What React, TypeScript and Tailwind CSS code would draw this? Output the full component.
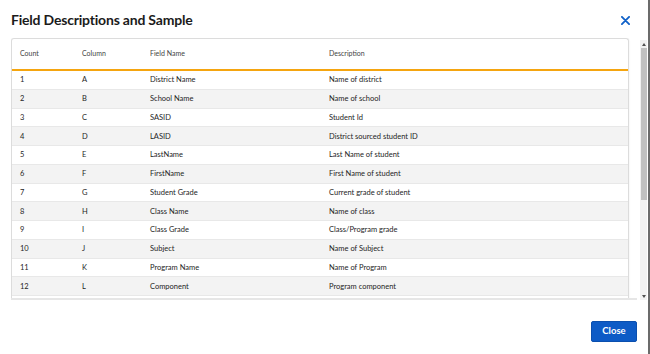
import React from "react";

const rows: [string, string, string, string][] = [
  ["1", "A", "District Name", "Name of district"],
  ["2", "B", "School Name", "Name of school"],
  ["3", "C", "SASID", "Student Id"],
  ["4", "D", "LASID", "District sourced student ID"],
  ["5", "E", "LastName", "Last Name of student"],
  ["6", "F", "FirstName", "First Name of student"],
  ["7", "G", "Student Grade", "Current grade of student"],
  ["8", "H", "Class Name", "Name of class"],
  ["9", "I", "Class Grade", "Class/Program grade"],
  ["10", "J", "Subject", "Name of Subject"],
  ["11", "K", "Program Name", "Name of Program"],
  ["12", "L", "Component", "Program component"],
];

export default function App() {
  return (
    <div
      className="relative w-[650px] h-[354px] overflow-hidden bg-white border-r-2 border-[#6b6b6b]"
      style={{ fontFamily: "Lato, 'Open Sans', sans-serif" }}
    >
      <div className="flex items-center justify-between pl-[11px] pr-[18px] pt-[10px] h-[30px]">
        <h1 className="text-[14px] leading-[20px] font-bold tracking-[-0.2px] text-[#1b1b1b]">
          Field Descriptions and Sample
        </h1>
        <svg width="9" height="9" viewBox="0 0 10 10" className="mt-[1px]">
          <path d="M1 1 L9 9 M9 1 L1 9" stroke="#1061c8" strokeWidth="2" strokeLinecap="round" />
        </svg>
      </div>
      <div className="flex mt-[8px] pl-[11px]">
        <div className="w-[626px] h-[262px] overflow-hidden border-b-2 border-[#e6e6e6]">
          <div className="w-[618px] h-[262px] border border-[#dcdcdc] border-b-0 rounded-tl-[3px] rounded-tr-[3px] shadow-[0_0_2px_rgba(0,0,0,0.08)]">
            <div className="flex items-center h-[32px] pb-[1px] border-b-2 border-[#f5a50f] text-[7px] text-[#444]">
              <div className="w-[69px] pl-[8px]">Count</div>
              <div className="w-[69px] pl-[1px]">Column</div>
              <div className="w-[179px]">Field Name</div>
              <div className="flex-1">Description</div>
            </div>
            {rows.map((r, i) => (
              <div
                key={r[0]}
                className={`flex items-center h-[18.75px] border-b border-[#e8e8e8] text-[7.5px] text-[#1e1e1e] ${
                  i % 2 === 1 ? "bg-[#f3f3f3]" : "bg-white"
                }`}
              >
                <div className="w-[69px] pl-[8px]">{r[0]}</div>
                <div className="w-[69px] pl-[1px]">{r[1]}</div>
                <div className="w-[179px]">{r[2]}</div>
                <div className="flex-1">{r[3]}</div>
              </div>
            ))}
          </div>
        </div>
        <div className="ml-[3px] mt-[2px] w-[7px] h-[260px] bg-[#f1f1f1] flex flex-col items-center">
          <div className="h-[8px] flex items-center justify-center">
            <div className="w-0 h-0 border-l-[2px] border-r-[2px] border-b-[3px] border-l-transparent border-r-transparent border-b-[#505050]" />
          </div>
          <div className="w-[6px] h-[152px] bg-[#c1c1c1]" />
          <div className="flex-1" />
          <div className="h-[8px] flex items-center justify-center">
            <div className="w-0 h-0 border-l-[2px] border-r-[2px] border-t-[3px] border-l-transparent border-r-transparent border-t-[#505050]" />
          </div>
        </div>
      </div>
      <div className="flex justify-end pr-[11px] mt-[21px]">
        <button className="w-[46px] h-[21px] rounded-[2px] bg-[#0d5bc6] border border-[#0a4fae] text-white text-[9.5px] font-bold">
          Close
        </button>
      </div>
    </div>
  );
}
